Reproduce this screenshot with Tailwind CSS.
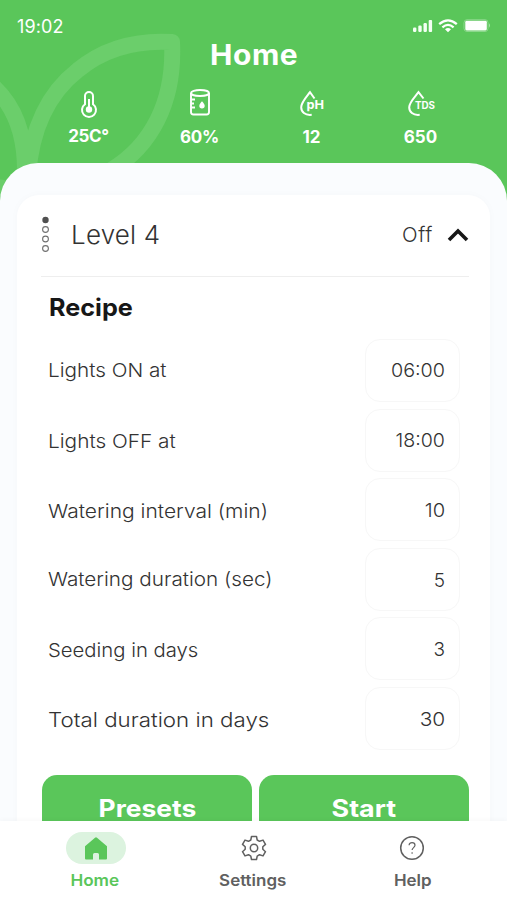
<!DOCTYPE html>
<html lang="en">
<head>
<meta charset="utf-8">
<title>Home</title>
<script src="https://cdn.jsdelivr.net/npm/@tailwindcss/browser@4"></script>
</head>
<body class="w-[507px] h-[900px] overflow-hidden bg-[#5ac65a] font-['Inter',sans-serif]">
<div class="relative isolate flex flex-col w-[507px] h-[900px] overflow-hidden">
  <!-- leaf watermark -->
  <svg class="absolute left-0 top-0 -z-10" width="200" height="210" viewBox="0 0 200 210" fill="none" stroke="#6bce6b" stroke-width="16">
    <path d="M-12 82C12 101 25 130 25 170V210M28 176C31 133 46 95 78 70C107 46 139 40 172 42C175 102 151 146 111 170C80 188 45 190 28 210M-10 187C8 187 17 190 24 205" stroke-linejoin="round"/>
  </svg>
  <header class="h-[163px] shrink-0 text-white">
    <div class="flex justify-between h-[40px] pl-[17px] pr-[16px] pt-[14px]">
      <span class="text-[18px] leading-[26px] tracking-[0.1px]">19:02</span>
      <svg class="mt-[4px]" width="79" height="16" viewBox="0 0 79 16" fill="none">
        <g fill="#f4fff4"><rect x="1" y="9.5" width="3.4" height="4.5" rx="1.2"/><rect x="6.3" y="7.5" width="3.4" height="6.5" rx="1.2"/><rect x="11.5" y="5" width="3.4" height="9" rx="1.2"/><rect x="16.7" y="2" width="3.4" height="12" rx="1"/></g>
        <path d="M27.2 6.2Q36 -1.500 44.800 6.200M30.400 9.300Q36 4.500 41.600 9.300" stroke="#fff" stroke-width="2.300"/>
        <path d="M33 11.200Q36 9 39 11.200L36 14.300Z" fill="#fff"/>
        <rect x="52" y="1.700" width="24" height="11.800" rx="3" stroke="#8bd88b"/><rect x="53.300" y="2.800" width="21.500" height="9.600" rx="1.400" fill="#fff"/><path d="M77 5.300Q79 7.500 77 9.700Z" fill="#a5e2a5"/>
      </svg>
    </div>
    <h1 class="text-center text-[28px] leading-[30px] font-bold tracking-[0.5px] pl-[2px]"><span class="inline-block scale-x-[1.07]">Home</span></h1>
    <div class="flex pl-[33px] pt-[17px] text-[17px] leading-[22px] font-bold">
      <div class="flex w-[111px] flex-col items-center gap-[7px]">
        <svg width="32" height="32" viewBox="0 0 32 32" fill="none" stroke="#fff" stroke-width="2"><path d="M12 17.200V9a4 4 0 0 1 8 0v8.200a7 7 0 1 1-8 0Z"/><path d="M16 12v10"/><circle cx="16" cy="22.500" r="3.200" fill="#fff" stroke="none"/></svg>
        <span class="tracking-[-0.4px] -mt-px">25C°</span>
      </div>
      <div class="flex w-[111px] flex-col items-center gap-[7px]">
        <svg width="32" height="32" viewBox="0 0 32 32" fill="none" stroke="#fff" stroke-width="1.900"><ellipse cx="16" cy="6" rx="9" ry="3"/><path d="M7 6v19a2.500 2.500 0 0 0 2.500 2.500h13a2.500 2.500 0 0 0 2.500-2.500V6M7 12.500h4M7 16.500h3M7 20.500h4" /><path d="M18 14.200c1.600 2 2.700 3.100 2.700 4.500a2.700 2.700 0 0 1-5.400 0c0-1.400 1.100-2.500 2.700-4.500Z" fill="#fff" stroke="none"/></svg>
        <span class="tracking-[-0.3px]">60%</span>
      </div>
      <div class="flex w-[111px] flex-col items-center gap-[7px]">
        <svg class="overflow-visible" width="32" height="32" viewBox="0 0 32 32" fill="none" stroke="#fff" stroke-width="2"><path d="M19.500 11.500 15 5.200C10.500 11 6.200 15.500 6.200 20.200c0 4.600 3.700 8.400 10.500 7.600"/><text x="11.500" y="22.300" font-size="12" font-weight="700" fill="#fff" stroke="none" textLength="17.500" lengthAdjust="spacingAndGlyphs">pH</text></svg>
        <span class="pl-[2px]">12</span>
      </div>
      <div class="flex w-[108px] flex-col items-center gap-[7px]">
        <svg class="overflow-visible" width="32" height="32" viewBox="0 0 32 32" fill="none" stroke="#fff" stroke-width="2"><path d="M19.500 11.500 14.500 5.200C10 11 5.200 15.500 5.200 20.200c0 4.600 3.700 8.400 10.500 7.600"/><text x="11" y="21.800" font-size="10" font-weight="700" fill="#fff" stroke="none" textLength="20" lengthAdjust="spacingAndGlyphs">TDS</text></svg>
        <span class="pl-px">650</span>
      </div>
    </div>
  </header>
  <main class="h-[658px] shrink-0 overflow-hidden rounded-t-[38px] bg-[#fafcfe] px-[17px] pt-[32px] text-[#333333]">
    <section class="h-[660px] rounded-t-[22px] bg-white pl-[24px] pr-[21px] shadow-[0_0_8px_rgba(0,0,0,0.025)]">
      <div class="flex h-[82px] items-center border-b border-[#eeeeee] pb-[2px]">
        <svg class="mt-px" width="9" height="38" viewBox="0 0 9 38" fill="none" stroke="#707070" stroke-width="1.100"><circle cx="4.500" cy="4" r="3.200" fill="#505050" stroke="none"/><circle cx="4.500" cy="13.500" r="2.900"/><circle cx="4.500" cy="23" r="2.900"/><circle cx="4.500" cy="32.500" r="2.900"/></svg>
        <h2 class="ml-[21px] text-[26px] font-light tracking-[0.2px]">Level 4</h2>
        <span class="ml-auto pt-[2px] text-[20.500px] font-light tracking-[0.6px]">Off</span>
        <svg class="ml-[14px]" width="22" height="16" viewBox="0 0 22 16" fill="none" stroke="#171717" stroke-width="3.600"><path d="m2 13 9-9 9 9"/></svg>
      </div>
      <h3 class="pl-[8px] pt-[15px] text-[24px] leading-[32px] font-bold text-[#171717]"><span class="inline-block origin-left scale-x-[1.05]">Recipe</span></h3>
      <div class="mt-[15px] flex flex-col gap-[6.600px] pl-[7px] pr-[9px] text-[19px] font-light">
        <div class="flex h-[63px] items-center justify-between"><span class="origin-left scale-x-[1.09] pt-[2px]">Lights ON at</span><div class="flex h-full w-[95px] items-center justify-end rounded-[15px] border border-[#f7f7f7] pr-[14px] pt-px"><span class="origin-right scale-x-[1.04]">06:00</span></div></div>
        <div class="flex h-[63px] items-center justify-between"><span class="origin-left scale-x-[1.095] pt-[4px]">Lights OFF at</span><div class="flex h-full w-[95px] items-center justify-end rounded-[15px] border border-[#f7f7f7] pr-[14px] pt-[3px]"><span class="origin-right scale-x-[1.03]">18:00</span></div></div>
        <div class="flex h-[63px] items-center justify-between"><span class="origin-left scale-x-[1.105] pt-[5px]">Watering interval (min)</span><div class="flex h-full w-[95px] items-center justify-end rounded-[15px] border border-[#f7f7f7] pr-[14px] pt-[3px]"><span class="origin-right scale-x-[1.06]">10</span></div></div>
        <div class="flex h-[63px] items-center justify-between"><span class="origin-left scale-x-[1.09] pt-px">Watering duration (sec)</span><div class="flex h-full w-[95px] items-center justify-end rounded-[15px] border border-[#f7f7f7] pr-[14px] pt-[3px]">5</div></div>
        <div class="flex h-[63px] items-center justify-between"><span class="origin-left scale-x-[1.068] pt-[4px]">Seeding in days</span><div class="flex h-full w-[95px] items-center justify-end rounded-[15px] border border-[#f7f7f7] pr-[14px] pt-[3px]">3</div></div>
        <div class="flex h-[63px] items-center justify-between"><span class="origin-left scale-x-[1.115] pt-[4px] text-[20px]">Total duration in days</span><div class="flex h-full w-[95px] items-center justify-end rounded-[15px] border border-[#f7f7f7] pr-[14px] pt-[4px]"><span class="origin-right scale-x-[1.1]">30</span></div></div>
      </div>
      <div class="mt-[25px] flex gap-[7px] pl-px text-center text-[24px] leading-[22px] font-bold text-white">
        <button class="h-[69px] flex-1 rounded-[15px] bg-[#5ac65a]"><span class="inline-block scale-x-[1.1]">Presets</span></button>
        <button class="h-[69px] flex-1 rounded-[15px] bg-[#5ac65a]"><span class="inline-block scale-x-[1.12]">Start</span></button>
      </div>
    </section>
  </main>
  <nav class="relative flex h-[79px] shrink-0 justify-between bg-white pl-[46px] pr-[45px] pt-[11px] text-[16px] leading-[22px] font-semibold text-[#606060] shadow-[0_-1px_5px_rgba(0,0,0,0.03)]">
    <a class="flex w-[100px] flex-col items-center gap-[5px] text-[#5ac65a]">
      <span class="flex h-[32px] w-[60px] items-center justify-center rounded-full bg-[#dcf3df]"><svg width="24" height="24" viewBox="0 0 24 24" fill="#5ac65a"><path d="M1 10.300 11 1.700a1.600 1.600 0 0 1 2 0L23 10.300V22.500a1 1 0 0 1-1 1H15V18.500a1.500 1.500 0 0 0-1.500-1.500h-3A1.500 1.500 0 0 0 9 18.500v5H2a1 1 0 0 1-1-1Z"/></svg></span>
      <span class="scale-x-[1.07] -translate-x-px">Home</span>
    </a>
    <a class="flex w-[100px] flex-col items-center gap-[5px]">
      <svg width="32" height="32" viewBox="0 0 32 32" fill="none" stroke="#606060" stroke-width="1.500" stroke-linejoin="round"><path d="M13.500 4.500h5l.7 3.500 2.300 1.300 3.500-1.200 2.500 4.300-2.700 2.300v2.600l2.700 2.400-2.500 4.200-3.500-1.200-2.300 1.400-.7 3.400h-5l-.7-3.400-2.300-1.400-3.500 1.200-2.500-4.200 2.700-2.400v-2.600l-2.700-2.300L7 8.100l3.500 1.200L12.800 8Z"/><circle cx="16" cy="16" r="3.700"/></svg>
      <span class="scale-x-[1.06] -translate-x-px">Settings</span>
    </a>
    <a class="flex w-[100px] flex-col items-center gap-[5px]">
      <svg width="32" height="32" viewBox="0 0 32 32" fill="none" stroke="#606060" stroke-width="1.500"><circle cx="16" cy="16" r="11.300"/><path stroke-width="1.200" d="M13.100 13.300c0-3.600 5.900-3.500 5.900 0 0 2.200-2.900 2.400-2.900 4.800M16.100 20.200v1.600"/></svg>
      <span class="scale-x-[1.06] translate-x-px">Help</span>
    </a>
  </nav>
</div>
</body>
</html>
